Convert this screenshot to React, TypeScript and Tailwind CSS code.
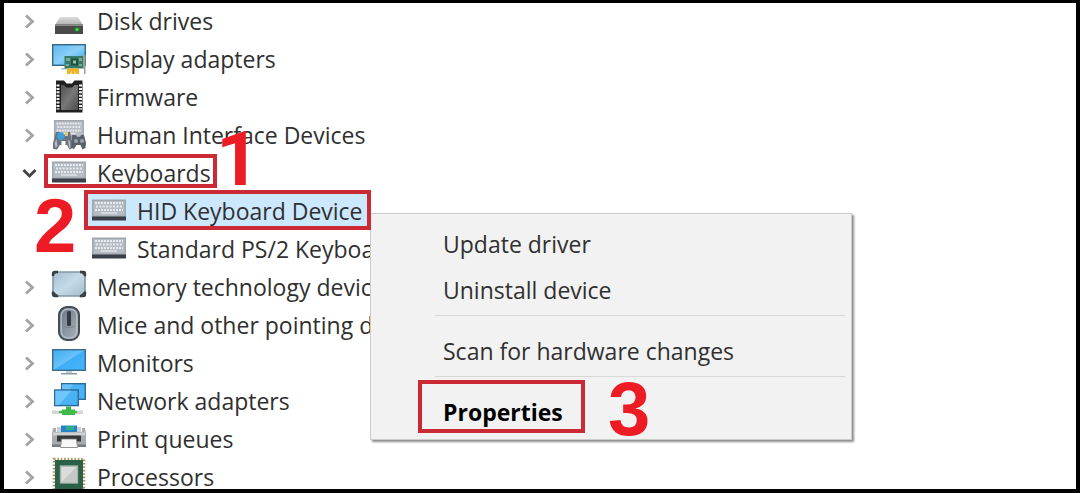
import type { ReactNode } from "react";

function Icon({ children }: { children: ReactNode }) {
  return (
    <svg viewBox="0 0 34 34" className="size-[34px] shrink-0 overflow-visible" aria-hidden="true">
      {children}
    </svg>
  );
}

function DiskIcon() {
  return (
    <Icon>
      <defs>
        <linearGradient id="disk-top" x1="0" y1="0" x2="0" y2="1">
          <stop offset="0" stopColor="#dedede" />
          <stop offset="1" stopColor="#b0b0b0" />
        </linearGradient>
      </defs>
      <path d="M8 13h18l5 8H3z" fill="url(#disk-top)" />
      <path d="M3 20.500h28V30H3z" fill="#4a4a4a" />
      <path d="M3 20.500h28v1.500H3z" fill="#8a8a8a" />
      <circle cx="25" cy="25.500" r="3" fill="#1f7a26" opacity="0.700" />
      <circle cx="25" cy="25.500" r="1.500" fill="#4be04f" />
    </Icon>
  );
}

function DisplayIcon() {
  return (
    <Icon>
      <defs>
        <linearGradient id="adapter-screen" x1="0" y1="0" x2="1" y2="1">
          <stop offset="0" stopColor="#5fb8ee" />
          <stop offset="0.500" stopColor="#8bd0f8" />
          <stop offset="1" stopColor="#2f9fe8" />
        </linearGradient>
      </defs>
      <rect x="0.700" y="2.700" width="32.600" height="20.600" fill="url(#adapter-screen)" stroke="#35678a" strokeWidth="1.400" />
      <path d="M9 26h6v1.500H9z" fill="#a9bcc8" />
      <path d="M12.500 14H32v12.500H12.500z" fill="#39796a" />
      <path d="M14 16h4v3h-4zM13.500 22h3.500v2h-3.500zM27 16h3v3h-3zM27 22h3v2h-3z" fill="#6fae8e" />
      <rect x="19" y="16.500" width="7" height="7" fill="#1f5145" />
      <rect x="21" y="18.500" width="3" height="3" fill="#8fc4a5" />
      <path d="M15 26.500h12V32H15z" fill="#f0b322" />
      <path d="M19 29.500v2.500M23 29.500v2.500" stroke="#fff3cf" strokeWidth="1" />
      <path d="M31 13h2.500v19H32v-6h-1z" fill="#98a197" />
    </Icon>
  );
}

function FirmwareIcon() {
  return (
    <Icon>
      <defs>
        <linearGradient id="firmware-body" x1="0" y1="0" x2="1" y2="1">
          <stop offset="0" stopColor="#505050" />
          <stop offset="0.500" stopColor="#777" />
          <stop offset="1" stopColor="#4c4c4c" />
        </linearGradient>
      </defs>
      <path d="M4 0.500h8l2.500 3h5.500l2.500-3H30.500v32H4z" fill="#1f1f1f" />
      <path d="M9 5h3l2.500 2.500H20L22.500 5H26v25H9z" fill="url(#firmware-body)" />
      <path d="M6 4.500v25M28.500 4.500v25" stroke="#f2f2f2" strokeWidth="3" strokeDasharray="2 1.400" />
    </Icon>
  );
}

function KeyboardShape() {
  return (
    <>
      <path d="M0 5.500h34V24H0z" fill="#a0a7ae" />
      <path d="M1.500 7h31v14.500h-31z" fill="#b6bcc3" />
      <path d="M3 9h28" stroke="#e8ebee" strokeWidth="2" strokeDasharray="2 1" />
      <path d="M4 12.500h26" stroke="#e8ebee" strokeWidth="2" strokeDasharray="2 1.400" />
      <path d="M3 16h28" stroke="#e8ebee" strokeWidth="2" strokeDasharray="2 1" />
      <path d="M9 19h16" stroke="#dfe3e6" strokeWidth="1.500" />
    </>
  );
}

function KeyboardIcon() {
  return (
    <Icon>
      <KeyboardShape />
      <path d="M0 22.500h34V26.500H0z" fill="#3a3f49" />
    </Icon>
  );
}

function HidIcon() {
  return (
    <Icon>
      <g transform="translate(2 -3.500) scale(0.880 1)">
        <KeyboardShape />
      </g>
      <path d="M4 14h4l1.500 3h3L14 14h4l2 9 .5 7-3 1.500L15 27h-1.500v-4h-4v4H8l-3 4.500-4-.5L1 25z" fill="#6b737c" />
      <path d="M6 14.500h5l2 4-3.500 4.500-4.500-3z" fill="#3f9fdb" />
      <path d="M13 14h3v4h-3z" fill="#e8c67a" />
      <path d="M2.500 25l2-4 1 7-2 2zM16 22l2 1 .5 6-1.500 1z" fill="#b4bdc6" />
      <path d="M20 17h4l1 2h3l1-2h3l2 8-.5 5-3 1.500-2-4.500h-4l-2.500 4-2.500-1z" fill="#59626c" />
      <circle cx="24" cy="23" r="2" fill="#99a3ad" />
      <circle cx="30" cy="23" r="2" fill="#99a3ad" />
    </Icon>
  );
}

function MemoryIcon() {
  return (
    <Icon>
      <defs>
        <linearGradient id="memory-body" x1="0" y1="0" x2="1" y2="1">
          <stop offset="0" stopColor="#a4bfd0" />
          <stop offset="0.500" stopColor="#c5dbe7" />
          <stop offset="1" stopColor="#a2bccc" />
        </linearGradient>
      </defs>
      <rect x="1" y="2" width="32" height="24" rx="3" fill="url(#memory-body)" stroke="#8397a3" strokeWidth="1.600" />
      <path d="M1 6V4a2 2 0 0 1 2-2h3M28 2h3a2 2 0 0 1 2 2v2M33 22v2a2 2 0 0 1-2 2h-3M6 26H3a2 2 0 0 1-2-2v-2" fill="none" stroke="#30363b" strokeWidth="2.400" />
      <path d="M33.500 20.500v6H27zM0.500 20.500v6H7zM33.500 7V1.500H28zM0.500 6V1.500H6z" fill="#3b4349" />
    </Icon>
  );
}

function MouseIcon() {
  return (
    <Icon>
      <defs>
        <linearGradient id="mouse-body" x1="0" y1="0" x2="1" y2="1">
          <stop offset="0" stopColor="#687481" />
          <stop offset="1" stopColor="#a9b4be" />
        </linearGradient>
      </defs>
      <rect x="7" y="-1" width="20" height="33" rx="8" fill="url(#mouse-body)" stroke="#454c54" strokeWidth="2" />
      <rect x="9.200" y="1.200" width="15.600" height="28.600" rx="6.500" fill="none" stroke="#b9c1c8" strokeWidth="1.300" />
      <path d="M11 18c3 2 9 2 12 0" fill="none" stroke="#7c8792" strokeWidth="1" />
      <rect x="15" y="3" width="4" height="15" rx="1.500" fill="#343a42" />
    </Icon>
  );
}

function MonitorIcon() {
  return (
    <Icon>
      <defs>
        <linearGradient id="monitor-screen" x1="0" y1="0" x2="1" y2="1">
          <stop offset="0" stopColor="#3fabee" />
          <stop offset="0.490" stopColor="#68c2fa" />
          <stop offset="0.510" stopColor="#3fb0f8" />
          <stop offset="1" stopColor="#42b4fb" />
        </linearGradient>
      </defs>
      <rect x="0.700" y="3.700" width="32.600" height="20.600" fill="url(#monitor-screen)" stroke="#3a6c8d" strokeWidth="1.400" />
      <path d="M14 25h6v2h-6z" fill="#c3ccd2" />
      <path d="M9 27h16v1.500H9z" fill="#8e9ba3" />
    </Icon>
  );
}

function NetworkIcon() {
  return (
    <Icon>
      <rect x="9.700" y="-0.300" width="23.600" height="15.600" fill="#4bb1f2" stroke="#2c6a99" strokeWidth="1.400" />
      <path d="M10 0.400h11l-9 14.600h-2z" fill="#6cc2f7" />
      <rect x="2.700" y="6" width="23.600" height="15.600" fill="#49b2f5" stroke="#2c6a99" strokeWidth="1.400" />
      <path d="M3.400 6.700h16L7 20.900H3.400z" fill="#70c6fa" />
      <path d="M0 26.500h31V30H0z" fill="#d3d6d3" />
      <path d="M14 22.500h5v3h4V31H10v-5.500h4z" fill="#42b649" />
      <path d="M7 27h18v2H7z" fill="#3fbc45" />
    </Icon>
  );
}

function PrinterIcon() {
  return (
    <Icon>
      <path d="M5 5h24v6H5z" fill="#c9ced2" />
      <path d="M9 3.500h16v6.500H9z" fill="#2482c8" />
      <path d="M14 4h8v4h-8z" fill="#2fae8a" />
      <path d="M1 6h3v4h26V6h3l1 6v12H0V12z" fill="#a8abad" />
      <path d="M1 10.500h32v3H1z" fill="#d0d2d3" />
      <path d="M5 13.500h24v6H5z" fill="#35383b" />
      <path d="M9.500 17h15l1 8.500H8.500z" fill="#f8f8f8" stroke="#777" strokeWidth="0.800" />
      <path d="M0 22.500h8v2.500H0zM26 22.500h8v2.500h-8z" fill="#777b7e" />
    </Icon>
  );
}

function ProcessorIcon() {
  return (
    <Icon>
      <rect x="2" y="-1" width="30" height="33" fill="none" stroke="#a8955a" strokeWidth="2.500" strokeDasharray="1.600 1.800" />
      <rect x="3" y="0" width="28" height="32" fill="#2b6148" />
      <rect x="8.500" y="6" width="17" height="17" fill="#dcdcdc" stroke="#9db4a5" strokeWidth="1.400" />
      <path d="M9 22.500L25 6.500v16z" fill="#c6c8c7" />
    </Icon>
  );
}

function Chevron({ open }: { open?: boolean }) {
  return open ? (
    <svg viewBox="0 0 16 16" className="size-4" fill="none" stroke="#454545" strokeWidth="3" aria-hidden="true">
      <path d="M1.500 5l6 6 6-6" />
    </svg>
  ) : (
    <svg viewBox="0 0 16 16" className="size-4" fill="none" stroke="#a3a3a3" strokeWidth="2.800" aria-hidden="true">
      <path d="M4 2.500l6.500 6-6.500 6" />
    </svg>
  );
}

type Device = {
  name: string;
  icon: ReactNode;
  marked?: boolean;
  children?: { name: string; selected?: boolean }[];
};

const devices: Device[] = [
  { name: "Disk drives", icon: <DiskIcon /> },
  { name: "Display adapters", icon: <DisplayIcon /> },
  { name: "Firmware", icon: <FirmwareIcon /> },
  { name: "Human Interface Devices", icon: <HidIcon /> },
  {
    name: "Keyboards",
    icon: <KeyboardIcon />,
    marked: true,
    children: [{ name: "HID Keyboard Device", selected: true }, { name: "Standard PS/2 Keyboard" }],
  },
  { name: "Memory technology devices", icon: <MemoryIcon /> },
  { name: "Mice and other pointing devices", icon: <MouseIcon /> },
  { name: "Monitors", icon: <MonitorIcon /> },
  { name: "Network adapters", icon: <NetworkIcon /> },
  { name: "Print queues", icon: <PrinterIcon /> },
  { name: "Processors", icon: <ProcessorIcon /> },
];

function Marker({ className }: { className: string }) {
  return <span className={`pointer-events-none absolute z-20 border-4 border-[#cb2a34] ${className}`} />;
}

function Step({ n, className }: { n: number; className: string }) {
  return (
    <span className={`pointer-events-none absolute z-20 text-[76px] leading-none font-bold text-[#ed1c24] ${className}`}>
      {n}
    </span>
  );
}

function DeviceTree() {
  return (
    <ul className="-mt-px pl-4">
      {devices.map((device) => (
        <li key={device.name}>
          <div className="flex h-[38px] items-center">
            <button type="button" aria-label={`Toggle ${device.name}`} className="mr-3 flex w-5 justify-center">
              <Chevron open={Boolean(device.children)} />
            </button>
            <div className="relative flex items-center gap-[11px] whitespace-nowrap">
              {device.icon}
              <span>{device.name}</span>
              {device.marked && <Marker className="-top-0.5 -right-1.5 bottom-0.5 -left-2" />}
            </div>
          </div>
          {device.children && (
            <ul className="pl-[72px]">
              {device.children.map((child) => (
                <li key={child.name} className="flex h-[38px] items-center">
                  <div
                    className={`relative -ml-1 flex h-full items-center gap-[11px] pl-1 whitespace-nowrap ${child.selected ? "bg-[#cce8ff] pr-1" : ""}`}
                  >
                    <KeyboardIcon />
                    <span>{child.name}</span>
                    {child.selected && <Marker className="-inset-x-1 -top-0.5 bottom-0" />}
                  </div>
                </li>
              ))}
            </ul>
          )}
        </li>
      ))}
    </ul>
  );
}

function MenuItem({ children, strong }: { children: ReactNode; strong?: boolean }) {
  return (
    <button
      type="button"
      role="menuitem"
      className={`flex h-[46px] w-full items-center pl-[72px] text-left ${strong ? "font-bold text-black" : ""}`}
    >
      <span className="relative">
        {children}
        {strong && <Marker className="-top-4 -right-[22px] -bottom-[5px] -left-[25px]" />}
      </span>
    </button>
  );
}

function MenuSeparator() {
  return <div role="separator" className="mt-0.5 mr-1.5 mb-3 ml-16 h-px bg-[#d8d8d8]" />;
}

function ContextMenu() {
  return (
    <div
      role="menu"
      className="absolute top-[210px] left-[366px] z-10 w-[482px] border border-[#cccccc] bg-[#f2f2f2] pt-[7px] pb-1 shadow-[2px_2px_2px_rgba(0,0,0,0.45)]"
    >
      <MenuItem>Update driver</MenuItem>
      <MenuItem>Uninstall device</MenuItem>
      <MenuSeparator />
      <MenuItem>Scan for hardware changes</MenuItem>
      <MenuSeparator />
      <MenuItem strong>Properties</MenuItem>
    </div>
  );
}

export default function App() {
  return (
    <main className="relative h-screen overflow-hidden border-4 border-t-[3px] border-black bg-white font-['Open_Sans','Noto_Sans',sans-serif] text-[23px] leading-8 text-[#303030]">
      <DeviceTree />
      <ContextMenu />
      <Step n={1} className="top-[118px] left-[212px] font-['Roboto',sans-serif]" />
      <Step n={2} className="top-[185px] left-[30px] font-['Liberation_Sans',sans-serif]" />
      <Step n={3} className="top-[368px] left-[604px] font-['Liberation_Sans',sans-serif]" />
    </main>
  );
}
